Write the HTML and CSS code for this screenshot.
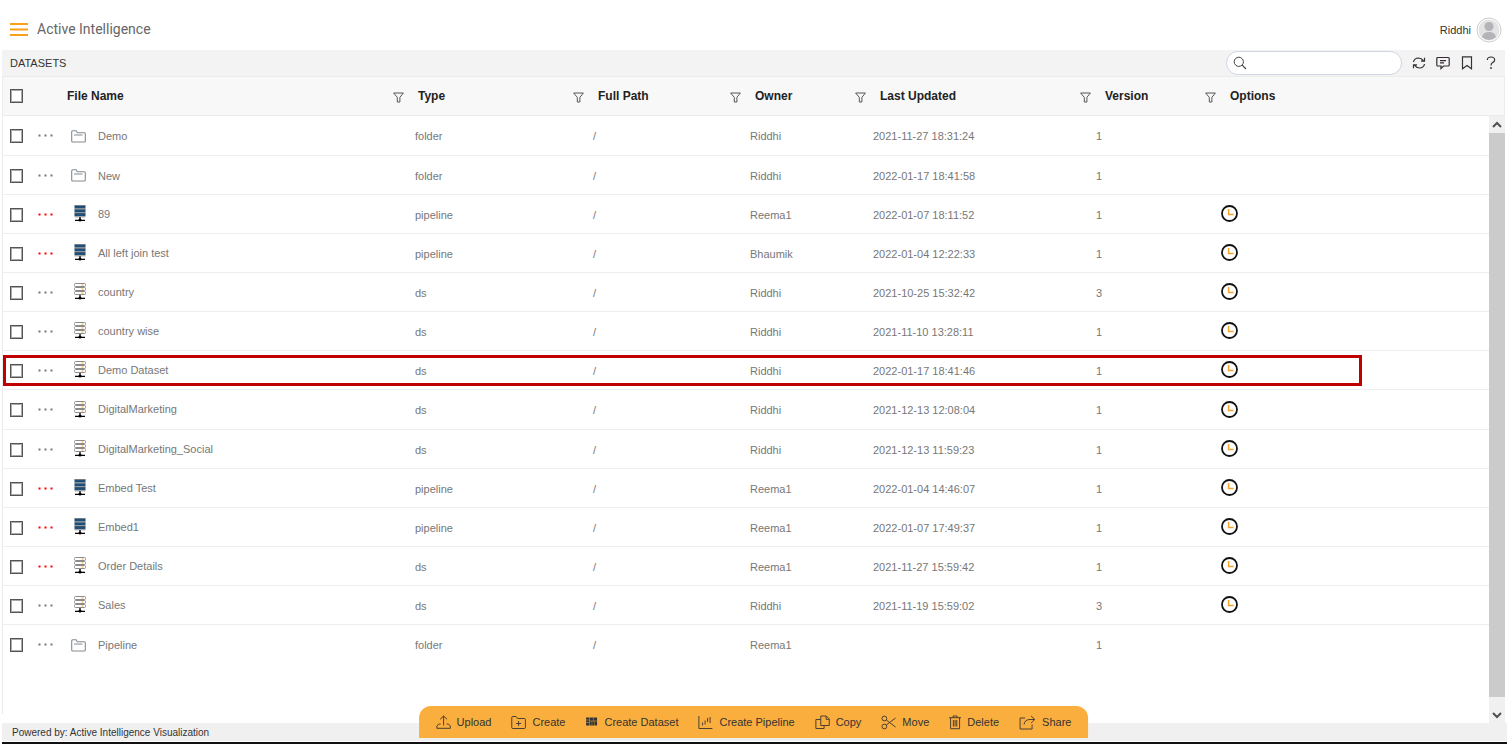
FILE: index.html
```html
<!DOCTYPE html>
<html lang="en">
<head>
<meta charset="utf-8">
<title>Active Intelligence</title>
<link rel="stylesheet" href="styles.css">
</head>
<body>
<svg class="defs" aria-hidden="true">
  <symbol id="filter" viewBox="0 0 11 11"><path d="M.6 1h9.8L6.9 5.3V10H4.3V5.3z" fill="none" stroke="#555" stroke-width="1"/></symbol>
  <symbol id="folder" viewBox="0 0 15 13"><path d="M.7 11V1.8Q.7.8 1.7.8h3.4l1.2 1.9h7Q14.3 2.700 14.300 3.700V11q0 1-1 1H1.700q-1 0-1-1zM3 5h8.500" fill="none" stroke="#848b92" stroke-width="1.100"/></symbol>
  <symbol id="pipeline" viewBox="0 0 12 17"><path d="M.5.5h11v3H.5zM.5 4.300h11v3H.5zM.5 8.100h11v3H.5z" fill="#1f4e79"/><path d="M.5.5h11M.5 4h11M.5 7.800h11M.5 11.800h11" stroke="#777" stroke-width=".9"/><path d="M6 12v2M1 15.300h10" stroke="#000" stroke-width="1.300"/><circle cx="6" cy="15" r="1.500"/></symbol>
  <symbol id="ds" viewBox="0 0 12 17"><g fill="#fff" stroke="#8b8b8b"><rect x=".5" y=".5" width="11" height="3" rx="1"/><rect x=".5" y="4.500" width="11" height="3" rx="1"/><rect x=".5" y="8.500" width="11" height="3" rx="1"/></g><path d="M7.500 2h2M7.500 6h2M7.500 10h2" stroke="#f5a32c" stroke-width="1.200"/><path d="M6 12v2M1 15.300h10" stroke="#000" stroke-width="1.300"/><circle cx="6" cy="15" r="1.500"/></symbol>
  <symbol id="clock" viewBox="0 0 17 17"><circle cx="8.500" cy="8.500" r="7.500" fill="#fff" stroke="#111" stroke-width="1.800"/><path d="M7.600 4v5.500h5" fill="none" stroke="#f5a32c" stroke-width="1.500"/></symbol>
  <symbol id="dots" viewBox="0 0 15 3"><path d="M.5.5h2v2h-2zM6.500.5h2v2h-2zM12.500.5h2v2h-2z" fill="currentColor"/></symbol>
</svg>

<header class="topbar">
  <button class="menu" type="button" aria-label="Menu"><svg width="18" height="13" viewBox="0 0 18 13"><path d="M0 1h18M0 6.500h18M0 12h18" stroke="#f9a11b" stroke-width="1.800"/></svg></button>
  <h1 class="brand">Active Intelligence</h1>
  <div class="user">
    <span>Riddhi</span>
    <svg width="26" height="26" viewBox="0 0 26 26" aria-hidden="true"><circle cx="13" cy="13" r="12" fill="#fff" stroke="#ccc"/><circle cx="13" cy="13" r="10.500" fill="#e3e3e4"/><circle cx="13" cy="9.500" r="4.500" fill="#b3b4b7"/><path d="M6 20q1-5 7-5t7 5q-3 3-7 3t-7-3z" fill="#b3b4b7"/></svg>
  </div>
</header>

<main class="panel">
  <div class="strip">
    <h2 class="title">DATASETS</h2>
    <div class="search">
      <svg width="14" height="14" viewBox="0 0 14 14" aria-hidden="true"><circle cx="5.800" cy="5.800" r="4.600" fill="none" stroke="#444"/><path d="M9.200 9.200l3.800 3.800" stroke="#444" stroke-width="1.200"/></svg>
      <input type="search" aria-label="Search datasets">
    </div>
    <button type="button" aria-label="Refresh"><svg width="14" height="14" viewBox="0 0 14 14"><path d="M1.500 6Q2.200 2.200 6.500 2q3 0 5 2.800M12.500 1.700v3.500H9M12.500 8q-.7 3.800-5 4-3 0-5-2.800M1.500 12.300V8.800H5" fill="none" stroke="#333" stroke-width="1.200"/></svg></button>
    <button type="button" aria-label="Comments"><svg width="14" height="14" viewBox="0 0 14 14"><path d="M1.700 1.500h10.600q.9 0 .9.900v6.700q0 .9-.9.900H7.500L5 12.500V10H1.700Q.8 10 .8 9.100V2.400q0-.9.900-.9zM4 4.700h6M4 6.900h4" fill="none" stroke="#332b33" stroke-width="1.200"/></svg></button>
    <button type="button" aria-label="Bookmark"><svg width="14" height="14" viewBox="0 0 14 14"><path d="M2.500.8h9v12L7 9.500l-4.500 3.300z" fill="none" stroke="#333" stroke-width="1.200"/></svg></button>
    <button type="button" aria-label="Help"><svg width="14" height="14" viewBox="0 0 14 14"><path d="M3.300 4Q3.500 1 7 1t3.700 3Q10.700 5.500 8.600 6.600 7 7.500 7 9.500" fill="none" stroke="#333" stroke-width="1.200"/><circle cx="7" cy="12" r=".9" fill="#333"/></svg></button>
  </div>

  <table class="grid head">
    <colgroup><col class="h-check"><col><col class="h-type"><col class="h-path"><col class="h-owner"><col class="h-date"><col class="h-ver"><col class="h-opt"></colgroup>
    <thead><tr>
      <th><input type="checkbox" aria-label="Select all"></th>
      <th><div class="label">File Name<button type="button" aria-label="Filter file name"><svg width="11" height="11"><use href="#filter"/></svg></button></div></th>
      <th><div class="label">Type<button type="button" aria-label="Filter type"><svg width="11" height="11"><use href="#filter"/></svg></button></div></th>
      <th><div class="label">Full Path<button type="button" aria-label="Filter full path"><svg width="11" height="11"><use href="#filter"/></svg></button></div></th>
      <th><div class="label">Owner<button type="button" aria-label="Filter owner"><svg width="11" height="11"><use href="#filter"/></svg></button></div></th>
      <th><div class="label">Last Updated<button type="button" aria-label="Filter last updated"><svg width="11" height="11"><use href="#filter"/></svg></button></div></th>
      <th><div class="label">Version<button type="button" aria-label="Filter version"><svg width="11" height="11"><use href="#filter"/></svg></button></div></th>
      <th><div class="label">Options</div></th>
    </tr></thead>
  </table>

  <div class="scroller">
    <div class="rows">
      <table class="grid body">
        <colgroup><col class="b-check"><col class="b-dots"><col><col class="b-type"><col class="b-path"><col class="b-owner"><col class="b-date"><col class="b-ver"><col class="b-opt"></colgroup>
        <tbody id="files"></tbody>
      </table>
    </div>
    <div class="scrollbar">
      <button type="button" aria-label="Scroll up"><svg width="10" height="7" viewBox="0 0 10 7"><path d="M1 6l4-4 4 4" fill="none" stroke="#505050" stroke-width="2"/></svg></button>
      <div class="thumb"></div>
      <button class="down" type="button" aria-label="Scroll down"><svg width="10" height="7" viewBox="0 0 10 7"><path d="M1 1l4 4 4-4" fill="none" stroke="#505050" stroke-width="2"/></svg></button>
    </div>
  </div>
</main>

<footer class="footer">Powered by: Active Intelligence Visualization</footer>

<nav class="actions" aria-label="Actions">
  <button type="button"><svg width="15" height="15" viewBox="0 0 15 15"><path d="M7.500 10.500V1M4 4.300L7.500 1 11 4.300M4.500 9H2.700L.8 11v2.300h13.400V11l-1.900-2h-1.800"/></svg>Upload</button>
  <button type="button"><svg width="15" height="15" viewBox="0 0 15 15"><path d="M.7 12.500v-10Q.7 1.500 1.700 1.500H5l1.500 2h6.800q1 0 1 1v8q0 1-1 1H1.700q-1 0-1-1zM7.500 6v5M5 8.500h5"/></svg>Create</button>
  <button type="button"><svg width="13" height="15" viewBox="0 0 13 15"><path class="solid" d="M1 2.500h3v2.300H1zM1 5.300h3v2.300H1zM1 8.100h3v2.400H1zM4.500 2.500h3.600v3.300H4.500zM8.500 2.500H12v3.300H8.500zM4.500 6.300h2.200v4.200H4.500zM7.100 6.300h2.200v4.200H7.100zM9.700 6.300H12v4.200H9.700z"/></svg>Create Dataset</button>
  <button type="button"><svg width="15" height="15" viewBox="0 0 15 15"><path d="M.8 1v12.500h13.500M4.500 7.500v3M7 5.500v4M9.500 3v4M12 2v6"/></svg>Create Pipeline</button>
  <button type="button"><svg width="15" height="15" viewBox="0 0 15 15"><path d="M5.700 1h5.500l3 3v6.500H5.700zM11 1v3.300h3.200M5.700 4.500H.8v9H9v-3"/></svg>Copy</button>
  <button type="button"><svg width="15" height="15" viewBox="0 0 15 15"><circle cx="3.300" cy="3.500" r="2.400"/><circle cx="3.300" cy="11.500" r="2.400"/><path d="M5.200 5l9.300 7M5.200 10l9.300-7"/></svg>Move</button>
  <button type="button"><svg width="12" height="15" viewBox="0 0 12 15"><path d="M0 2.700h12M4 2.700V1h4v1.700M1.500 2.700v11h9v-11M4.300 5v6.500M6 5v6.500M7.700 5v6.500"/></svg>Delete</button>
  <button type="button"><svg width="17" height="15" viewBox="0 0 17 15"><path d="M6 3H1v11h12V9.500M5 9.500Q5.500 4.500 11 4.500h4.500M12 1l3.700 3.500L12 8"/></svg>Share</button>
</nav>
<script src="files.js"></script>
</body>
</html>
```

FILE: styles.css
```css
* { box-sizing: border-box; }
body {
  margin: 0;
  height: 100vh;
  display: flex;
  flex-direction: column;
  background: #fff;
  font-family: "Liberation Sans", Arial, sans-serif;
  font-size: 11px;
  color: #333;
  overflow: hidden;
}
.defs { position: absolute; width: 0; height: 0; }
svg { display: block; flex: none; }
button {
  border: 0;
  padding: 0;
  background: none;
  font: inherit;
  color: inherit;
  cursor: pointer;
}
h1, h2 { margin: 0; font-weight: normal; }

.topbar {
  flex: none;
  display: flex;
  align-items: center;
  height: 50px;
  padding: 10px 5px 0 10px;
}
.menu, .brand { padding-bottom: 2px; }
.brand {
  margin: 0 auto 0 9px;
  font-family: Roboto, sans-serif;
  font-size: 14px;
  line-height: 18px;
  color: #666;
}
.user { display: flex; align-items: center; gap: 5px; }

.panel {
  flex: 1;
  min-height: 0;
  display: flex;
  flex-direction: column;
  margin: 0 2px;
}
.strip {
  flex: none;
  display: flex;
  align-items: center;
  gap: 10px;
  height: 26px;
  padding: 0 7px 1px 8px;
  background: #f3f3f3;
}
.title { margin-right: auto; font-size: 11px; }
.search {
  display: flex;
  align-items: center;
  gap: 4px;
  width: 176px;
  height: 24px;
  padding: 0 8px 0 6px;
  border: 1px solid #cfd5e2;
  border-radius: 12px;
  background: #fff;
}
.search input {
  flex: 1;
  min-width: 0;
  border: 0;
  outline: 0;
  background: none;
  font: inherit;
}

.grid {
  width: 100%;
  table-layout: fixed;
  border-collapse: separate;
  border-spacing: 0;
}
.grid th, .grid td { padding: 0; text-align: left; }
.grid input {
  appearance: none;
  display: block;
  width: 13px;
  height: 14px;
  margin: 0 0 0 7px;
  border: 1px solid #555;
  outline: 1px solid #aaa;
  outline-offset: -2px;
  background: #fff;
}
.head {
  flex: none;
  height: 40px;
  border: 1px solid #ececec;
  background: #f8f8f8;
  font-size: 12px;
  color: #222;
}
.label {
  display: flex;
  align-items: center;
  justify-content: space-between;
  padding: 0 4px 0 10px;
}
.label button { padding-top: 2px; }
.h-check { width: 54px; }
.h-type { width: 180px; }
.h-path { width: 157px; }
.h-owner { width: 125px; }
.h-date { width: 225px; }
.h-ver { width: 125px; }
.h-opt { width: 284px; }

.scroller {
  flex: 1;
  min-height: 0;
  display: flex;
}
.rows {
  flex: 1;
  min-width: 0;
  margin-bottom: 9px;
  border-left: 1px solid #ececec;
  overflow: hidden;
}
.body { color: #777; }
.body tr { position: relative; height: 39px; }
.body tr:nth-child(7n+1) { height: 40px; }
.body td { border-bottom: 1px solid #eee; padding: 1px 0 0 4px; }
.body tr:last-child td { border-bottom: 0; }
.body td:first-child { padding: 1px 0 0; }
.body td.more { padding: 0; }
.more button { display: block; padding: 4px 0; color: #777; }
.more .alert { color: #f00; }
.b-check { width: 35px; }
.b-dots { width: 28px; }
.b-type { width: 178px; }
.b-path { width: 157px; }
.b-owner { width: 123px; }
.b-date { width: 223px; }
.b-ver { width: 125px; }
.b-opt { width: 272px; }
.file { display: flex; align-items: center; gap: 11px; }
.source .file { padding-bottom: 2px; }
.icon { width: 17px; display: flex; justify-content: center; }
.source .icon { padding-left: 3px; }
.marked td:last-child::after {
  content: "";
  position: absolute;
  inset: 4px 127px 4px 0;
  border: 3px solid #c00000;
  pointer-events: none;
}

.scrollbar {
  width: 16px;
  display: flex;
  flex-direction: column;
  background: #f0f0f0;
}
.scrollbar button {
  height: 17px;
  display: flex;
  align-items: center;
  justify-content: center;
}
.scrollbar .down { height: 26px; padding-top: 10px; }
.thumb { flex: 1; background: #cbcbcb; }

.footer {
  flex: none;
  height: 21px;
  margin: 0 0 1px 2px;
  padding: 0 10px;
  border-bottom: 2px solid #111;
  box-shadow: inset 0 -1px #fff;
  background: #f0f0f0;
  font-size: 10px;
  line-height: 19px;
}

.actions {
  position: fixed;
  left: 50%;
  bottom: 7px;
  transform: translateX(-50%);
  display: flex;
  align-items: center;
  gap: 20px;
  height: 32px;
  padding: 0 17px;
  border-radius: 12px 12px 0 0;
  background: #f9ae3e;
  white-space: nowrap;
}
.actions button { display: flex; align-items: center; gap: 6px; }
.actions svg { fill: none; stroke: #4d4030; stroke-width: 1; }
.actions .solid { fill: #333; stroke: none; }
```

FILE: files.js
```js
const files = [
  ["Demo", "folder", "Riddhi", "2021-11-27 18:31:24", 1],
  ["New", "folder", "Riddhi", "2022-01-17 18:41:58", 1],
  ["89", "pipeline", "Reema1", "2022-01-07 18:11:52", 1, true],
  ["All left join test", "pipeline", "Bhaumik", "2022-01-04 12:22:33", 1, true],
  ["country", "ds", "Riddhi", "2021-10-25 15:32:42", 3],
  ["country wise", "ds", "Riddhi", "2021-11-10 13:28:11", 1],
  ["Demo Dataset", "ds", "Riddhi", "2022-01-17 18:41:46", 1],
  ["DigitalMarketing", "ds", "Riddhi", "2021-12-13 12:08:04", 1],
  ["DigitalMarketing_Social", "ds", "Riddhi", "2021-12-13 11:59:23", 1],
  ["Embed Test", "pipeline", "Reema1", "2022-01-04 14:46:07", 1, true],
  ["Embed1", "pipeline", "Reema1", "2022-01-07 17:49:37", 1, true],
  ["Order Details", "ds", "Reema1", "2021-11-27 15:59:42", 1, true],
  ["Sales", "ds", "Riddhi", "2021-11-19 15:59:02", 3],
  ["Pipeline", "folder", "Reema1", "", 1]
];

const icon = (id, w, h) => `<svg width="${w}" height="${h}" aria-hidden="true"><use href="#${id}"/></svg>`;

document.getElementById("files").innerHTML = files.map(([name, type, owner, date, version, alert]) => {
  const folder = type === "folder";
  const classes = [folder ? "folder" : "source"];
  if (name === "Demo Dataset") classes.push("marked");
  return `<tr class="${classes.join(" ")}">
    <td><input type="checkbox" aria-label="Select ${name}"></td>
    <td class="more"><button type="button" class="${alert ? "alert" : ""}" aria-label="More actions for ${name}">${icon("dots", 15, 3)}</button></td>
    <td><div class="file"><span class="icon">${folder ? icon("folder", 15, 13) : icon(type, 12, 17)}</span>${name}</div></td>
    <td>${type}</td><td>/</td><td>${owner}</td><td>${date}</td><td>${version}</td>
    <td>${folder ? "" : `<button type="button" aria-label="Schedule ${name}">${icon("clock", 17, 17)}</button>`}</td>
  </tr>`;
}).join("");
```
